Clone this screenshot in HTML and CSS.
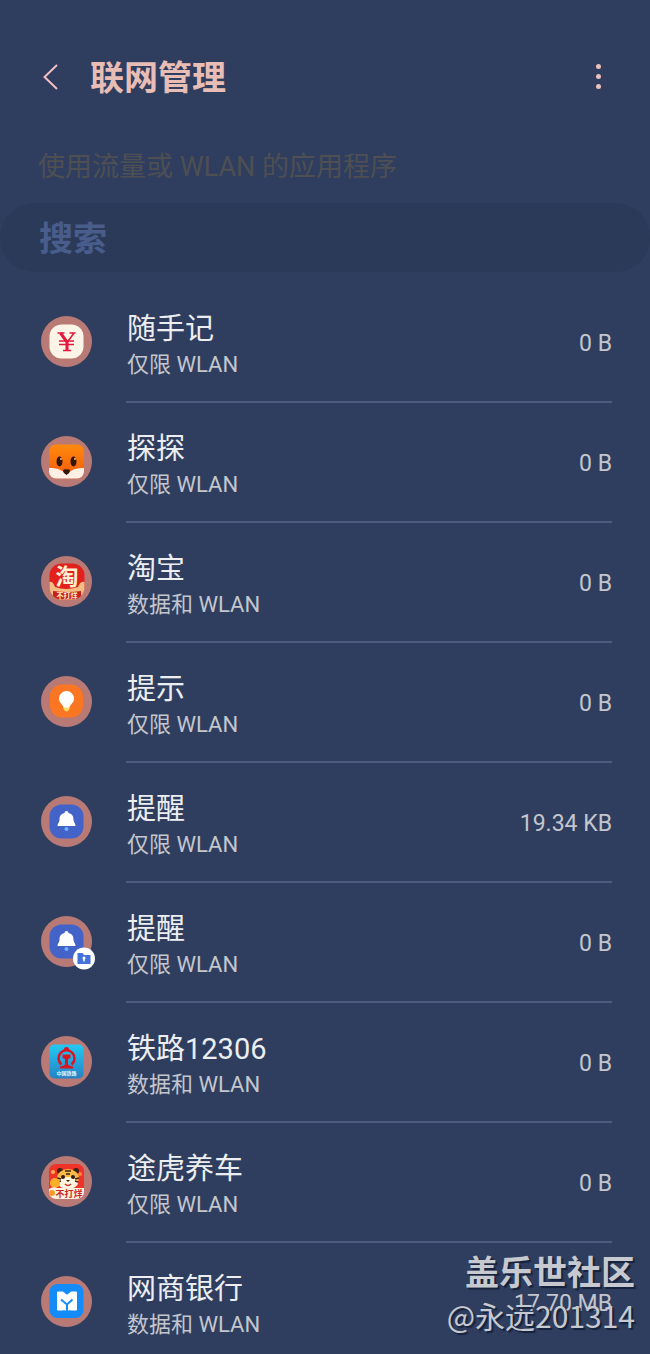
FILE: index.html
```
<!DOCTYPE html>
<html lang="zh-CN">
<head>
  <meta charset="utf-8">
  <meta name="viewport" content="width=device-width, initial-scale=1">
  <title>联网管理</title>
  <link rel="stylesheet" href="styles.css">
</head>
<body>

  <header class="header">
    <button type="button" class="icon-btn" aria-label="返回">
      <svg width="20" height="28" viewBox="0 0 20 28"><path d="M17 1L4.500 13 17 25" fill="none" stroke="#f3bfc4" stroke-width="2"/></svg>
    </button>
    <h1>联网管理</h1>
    <button type="button" class="icon-btn" aria-label="更多选项">
      <svg width="20" height="28" viewBox="0 0 20 28" fill="#e8c0bd"><circle cx="9.500" cy="2.500" r="2.500"/><circle cx="9.500" cy="12.500" r="2.500"/><circle cx="9.500" cy="22.500" r="2.500"/></svg>
    </button>
  </header>

  <label class="hint" for="search">使用流量或 WLAN 的应用程序</label>
  <input type="search" id="search" class="search" placeholder="搜索">

  <ul class="apps">
    <li class="app">
      <svg class="app-icon" viewBox="0 0 51 51">
        <circle cx="25.5" cy="25.5" r="25.5" fill="#b97a76"/>
        <rect x="8.5" y="8.5" width="34" height="34" rx="12" fill="#fdf4e8"/>
        <path d="M16.500 17h7M28.500 17h6M33 17l-6.500 9M18 25h15M18 28.500h15M22 34.500h8" fill="none" stroke="#e4173c" stroke-width="1.500"/>
        <path d="M19.500 17l6.500 9v8" fill="none" stroke="#e4173c" stroke-width="3"/>
      </svg>
      <div class="app-body">
        <div class="app-text"><h2>随手记</h2><p>仅限 WLAN</p></div>
        <span class="usage">0 B</span>
      </div>
    </li>

    <li class="app">
      <svg class="app-icon" viewBox="0 0 51 51">
        <defs>
          <linearGradient id="fox" x2="0" y2="1"><stop stop-color="#ff8b0c"/><stop offset="1" stop-color="#f4580b"/></linearGradient>
          <clipPath id="foxClip"><rect x="8" y="8.500" width="35" height="34" rx="7"/></clipPath>
        </defs>
        <circle cx="25.5" cy="25.5" r="25.5" fill="#b97a76"/>
        <g clip-path="url(#foxClip)">
          <path d="M8 8h35v35H8z" fill="url(#fox)"/>
          <path d="M8 32q10-1 17.500 6Q33 31 43 32v11H8z" fill="#fff0e6"/>
        </g>
        <ellipse cx="18.500" cy="25.500" rx="3" ry="5" fill="#31160a"/>
        <ellipse cx="32.500" cy="25.500" rx="3" ry="5" fill="#31160a"/>
        <circle cx="20" cy="23" r="1" fill="#ffc17e"/>
        <circle cx="34" cy="23" r="1" fill="#ffc17e"/>
        <path d="M22 35q0-2.500 3.500-1.500Q29 32.500 29 35q0 2-3.500 4-3.500-2-3.500-4z" fill="#31160a"/>
      </svg>
      <div class="app-body">
        <div class="app-text"><h2>探探</h2><p>仅限 WLAN</p></div>
        <span class="usage">0 B</span>
      </div>
    </li>

    <li class="app">
      <svg class="app-icon" viewBox="0 0 51 51">
        <defs><clipPath id="taoClip"><rect x="8.500" y="7.500" width="35" height="36" rx="12"/></clipPath></defs>
        <circle cx="25.5" cy="25.5" r="25.5" fill="#b97a76"/>
        <g clip-path="url(#taoClip)">
          <path d="M8 7h36v37H8z" fill="#e2211c"/>
          <path d="M8 26q4-1 6 5 11 4 23 0 2-6 7-5v18H8z" fill="#f4bd83"/>
          <path d="M12 35q14 2 28 0v8H12z" fill="#c92119"/>
        </g>
        <text class="glyph glyph-lg" x="26" y="29" fill="#fff0cf">淘</text>
        <text class="glyph glyph-sm" x="26" y="42" fill="#fff0cf">不打烊</text>
      </svg>
      <div class="app-body">
        <div class="app-text"><h2>淘宝</h2><p>数据和 WLAN</p></div>
        <span class="usage">0 B</span>
      </div>
    </li>

    <li class="app">
      <svg class="app-icon" viewBox="0 0 51 51">
        <circle cx="25.5" cy="25.5" r="25.5" fill="#b97a76"/>
        <rect x="9" y="8.500" width="33" height="33" rx="12" fill="#fa7622"/>
        <path d="M22.500 29h6v4q-3 5-6 0z" fill="#ffdb6a"/>
        <path d="M25.500 15a7.500 7.500 0 0 1 7.500 7.500c0 5-4 5.500-4.500 9h-6c-.5-3.500-4.500-4-4.500-9A7.500 7.500 0 0 1 25.500 15z" fill="#fff"/>
      </svg>
      <div class="app-body">
        <div class="app-text"><h2>提示</h2><p>仅限 WLAN</p></div>
        <span class="usage">0 B</span>
      </div>
    </li>

    <li class="app">
      <svg class="app-icon" viewBox="0 0 51 51">
        <circle cx="25.5" cy="25.5" r="25.5" fill="#b97a76"/>
        <rect x="8.500" y="8.500" width="34" height="34" rx="12" fill="#4363c9"/>
        <path id="bell" d="M25.500 15q2 0 2 2c4 1 5 3.500 5 7 0 2.500 2 3 2 6h-18c0-3 2-3.500 2-6 0-3.500 1-6 5-7q0-2 2-2z" fill="#fff"/>
        <circle cx="25.500" cy="33" r="2" fill="#6cb4ff"/>
      </svg>
      <div class="app-body">
        <div class="app-text"><h2>提醒</h2><p>仅限 WLAN</p></div>
        <span class="usage">19.34 KB</span>
      </div>
    </li>

    <li class="app">
      <svg class="app-icon" viewBox="0 0 51 51">
        <circle cx="25.5" cy="25.5" r="25.5" fill="#b97a76"/>
        <rect x="8.500" y="8.500" width="34" height="34" rx="12" fill="#4363c9"/>
        <use href="#bell"/>
        <circle cx="25.500" cy="33" r="2" fill="#6cb4ff"/>
        <circle cx="43" cy="42.500" r="11" fill="#fff"/>
        <path d="M36.500 37h5l1.500 2h6.500v9h-13z" fill="#4373da"/>
        <circle cx="43" cy="42" r="1.500" fill="#fff"/>
        <path d="M43 42v3.500" stroke="#fff" stroke-width="1.500"/>
      </svg>
      <div class="app-body">
        <div class="app-text"><h2>提醒</h2><p>仅限 WLAN</p></div>
        <span class="usage">0 B</span>
      </div>
    </li>

    <li class="app">
      <svg class="app-icon" viewBox="0 0 51 51">
        <defs><linearGradient id="rail" x2="0" y2="1"><stop stop-color="#24c9f3"/><stop offset="1" stop-color="#2582c4"/></linearGradient></defs>
        <circle cx="25.5" cy="25.5" r="25.5" fill="#b97a76"/>
        <rect x="8.500" y="8.500" width="34" height="34" rx="5" fill="url(#rail)"/>
        <path d="M20.500 28.500a8 8 0 1 1 10 0" fill="none" stroke="#d71625" stroke-width="2.500"/>
        <path d="M23 13q0-2 2.500-2t2.500 2v2h-5zM21.500 18.500h8v3.500l-2.500 1v5.500q1 1.500 5 2v2H19v-2q4-.5 5-2V23l-2.500-1z" fill="#d71625"/>
        <text class="glyph glyph-xs" x="25.500" y="39" fill="#e2f3ff">中国铁路</text>
      </svg>
      <div class="app-body">
        <div class="app-text"><h2>铁路12306</h2><p>数据和 WLAN</p></div>
        <span class="usage">0 B</span>
      </div>
    </li>

    <li class="app">
      <svg class="app-icon" viewBox="0 0 51 51">
        <defs><clipPath id="tigerClip"><rect x="8" y="8" width="35" height="35" rx="7"/></clipPath></defs>
        <circle cx="25.5" cy="25.5" r="25.5" fill="#b97a76"/>
        <g clip-path="url(#tigerClip)">
          <path d="M8 8h35v35H8z" fill="#ef3328"/>
          <circle cx="12" cy="16" r="2" fill="#ffb050"/>
          <circle cx="39" cy="18" r="2" fill="#ff8340"/>
          <circle cx="19" cy="15" r="3" fill="#402012"/>
          <circle cx="35" cy="15" r="3" fill="#402012"/>
          <ellipse cx="27" cy="22" rx="11" ry="9" fill="#f9ba46"/>
          <ellipse cx="27" cy="27" rx="10" ry="6" fill="#fff5df"/>
          <path d="M24 15h6M25 18h4M16 22l4 1M38 22l-4 1M17 26l3-1M37 26l-3-1" stroke="#402012" stroke-width="1.500"/>
          <circle cx="22" cy="21" r="2" fill="#2c1a13"/>
          <circle cx="32" cy="21" r="2" fill="#2c1a13"/>
          <path d="M25 24h4l-2 2z" fill="#2c1a13"/>
          <path d="M24 28q3 3 6 0" fill="none" stroke="#c53423" stroke-width="1.500"/>
          <circle cx="14" cy="27" r="5" fill="#ffae28"/>
          <path d="M8 33q4-3 8-1h27v11H8z" fill="#fff1df"/>
          <circle cx="11" cy="37" r="3" fill="#f39a29"/>
        </g>
        <text class="glyph glyph-md" x="28" y="41" fill="#cf2720">不打烊</text>
      </svg>
      <div class="app-body">
        <div class="app-text"><h2>途虎养车</h2><p>仅限 WLAN</p></div>
        <span class="usage">0 B</span>
      </div>
    </li>

    <li class="app">
      <svg class="app-icon" viewBox="0 0 51 51">
        <circle cx="25.5" cy="25.5" r="25.5" fill="#b97a76"/>
        <rect x="8.500" y="8" width="34" height="34" rx="8" fill="#138cf9"/>
        <path d="M17 16.500h4.500l4.500 3.500 4.500-3.500H35v17h-5V29l-2 1.500v3h-4v-3L22 29v4.500h-5z" fill="#fff" stroke="#fff" stroke-width="2" stroke-linejoin="round"/>
        <path d="M20 23.500l6 5 5.500-5M26 28v7" fill="none" stroke="#138cf9" stroke-width="2"/>
      </svg>
      <div class="app-body">
        <div class="app-text"><h2>网商银行</h2><p>数据和 WLAN</p></div>
        <span class="usage">17.70 MB</span>
      </div>
    </li>
  </ul>

  <div class="watermark">
    <strong>盖乐世社区</strong>
    <span>@永远201314</span>
  </div>

</body>
</html>
```
FILE: styles.css
```
* {
  box-sizing: border-box;
}

body {
  margin: 0;
  position: relative;
  background: #2f3e5f;
  color: #eceef2;
  font-family: Roboto, "Noto Sans CJK SC", sans-serif;
}

h1, h2, p, ul {
  margin: 0;
  padding: 0;
  font-weight: 400;
}

.header {
  display: flex;
  align-items: center;
  padding: 52px 41px 0 40px;
}

.header h1 {
  flex: 1;
  margin-left: 30px;
  font-size: 34px;
  line-height: 52px;
  font-weight: 700;
  color: #e8bdb5;
}

.icon-btn {
  display: flex;
  padding: 0;
  border: 0;
  background: none;
  cursor: pointer;
}

.hint {
  display: block;
  padding: 43px 38px 16px;
  font-size: 27px;
  line-height: 40px;
  color: #4e4f53;
}

.search {
  display: block;
  width: 100%;
  height: 69px;
  padding: 2px 39px 0;
  border: 0;
  border-radius: 35px;
  background: #2c3a59;
  color: #eceef2;
  font-family: inherit;
  font-size: 34px;
  font-weight: 700;
  outline: none;
}

.search::placeholder {
  color: #495d8c;
}

.apps {
  padding: 11px 38px 0 41px;
  list-style: none;
}

.app {
  display: flex;
  gap: 34px;
}

.app-icon {
  flex: none;
  width: 51px;
  height: 51px;
  margin-top: 33px;
  overflow: visible;
}

.app-body {
  flex: 1;
  display: flex;
  justify-content: space-between;
  padding: 27px 0 19px 1px;
  border-bottom: 2px solid #4c5c7e;
}

.app:last-child .app-body {
  padding-bottom: 12px;
  border-bottom: 0;
}

.app h2 {
  font-size: 29px;
  line-height: 38px;
}

.app p {
  font-size: 22px;
  line-height: 34px;
  color: #c3c6cd;
}

.usage {
  margin-top: 17px;
  font-size: 23px;
  line-height: 34px;
  color: #c3c6cd;
}

.glyph {
  font-family: "Noto Sans CJK SC", sans-serif;
  font-weight: 700;
  text-anchor: middle;
}

.glyph-lg {
  font-size: 23px;
}

.glyph-md {
  font-size: 9px;
}

.glyph-sm {
  font-size: 7px;
}

.glyph-xs {
  font-size: 5px;
}

.watermark {
  position: absolute;
  right: 15px;
  bottom: 16px;
  display: flex;
  flex-direction: column;
  align-items: flex-end;
  font-family: "Noto Sans CJK SC", sans-serif;
  font-size: 30px;
  line-height: 45px;
  color: #c6c9cf;
  text-shadow: 2px 2px 1px #17223c;
  pointer-events: none;
}

.watermark strong {
  font-size: 34px;
}
```
